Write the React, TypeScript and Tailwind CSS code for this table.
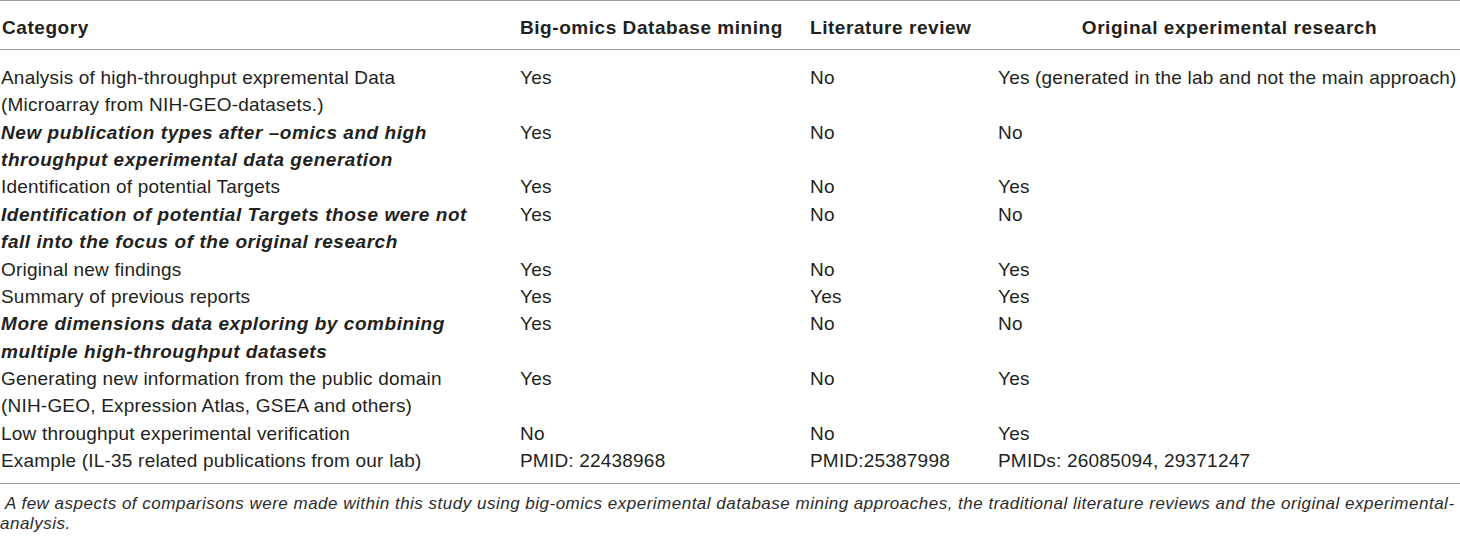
const rows: { cat: string[]; bold?: boolean; big: string; lit: string; orig: string }[] = [
  { cat: ['Analysis of high-throughput expremental Data', '(Microarray from NIH-GEO-datasets.)'], big: 'Yes', lit: 'No', orig: 'Yes (generated in the lab and not the main approach)' },
  { cat: ['New publication types after \u2013omics and high', 'throughput experimental data generation'], bold: true, big: 'Yes', lit: 'No', orig: 'No' },
  { cat: ['Identification of potential Targets'], big: 'Yes', lit: 'No', orig: 'Yes' },
  { cat: ['Identification of potential Targets those were not', 'fall into the focus of the original research'], bold: true, big: 'Yes', lit: 'No', orig: 'No' },
  { cat: ['Original new findings'], big: 'Yes', lit: 'No', orig: 'Yes' },
  { cat: ['Summary of previous reports'], big: 'Yes', lit: 'Yes', orig: 'Yes' },
  { cat: ['More dimensions data exploring by combining', 'multiple high-throughput datasets'], bold: true, big: 'Yes', lit: 'No', orig: 'No' },
  { cat: ['Generating new information from the public domain', '(NIH-GEO, Expression Atlas, GSEA and others)'], big: 'Yes', lit: 'No', orig: 'Yes' },
  { cat: ['Low throughput experimental verification'], big: 'No', lit: 'No', orig: 'Yes' },
  { cat: ['Example (IL-35 related publications from our lab)'], big: 'PMID: 22438968', lit: 'PMID:25387998', orig: 'PMIDs: 26085094, 29371247' },
];

const grid = 'grid grid-cols-[520px_290px_189px_461px]';

export default function App() {
  return (
    <div className="w-[1460px] h-[541px] bg-white text-[#231f20] overflow-hidden" style={{ fontFamily: '"Liberation Sans", Arial, sans-serif' }}>
      <div className="border-t border-[#9b9b9b]">
        {/* header */}
        <div className={`${grid} h-[49px] pt-[6px] items-center border-b-[1.5px] border-[#9b9b9b] text-[19px] font-bold tracking-[0.55px]`}>
          <div className="pl-[2px]">Category</div>
          <div>Big-omics Database mining</div>
          <div>Literature review</div>
          <div className="text-center">Original experimental research</div>
        </div>

        {/* body */}
        <div className="pt-[14px] pb-[9px] border-b-[1.5px] border-[#9b9b9b] text-[19px] leading-[27.36px] tracking-[0.2px]">
          {rows.map((r, i) => (
            <div key={i} className={grid}>
              <div className={r.bold ? 'pl-[1px] font-bold italic tracking-[0.55px]' : 'pl-[1px]'}>
                {r.cat.map((line, j) => (
                  <div key={j} className="whitespace-nowrap">{line}</div>
                ))}
              </div>
              <div className="whitespace-nowrap">{r.big}</div>
              <div className="whitespace-nowrap">{r.lit}</div>
              <div className="whitespace-nowrap -ml-[1px]">{r.orig}</div>
            </div>
          ))}
        </div>

        {/* caption */}
        <div className="pt-[10px] text-[17px] leading-[19.6px] italic tracking-[0.5px] text-[#2b2b2b]">
          <div className="pl-[5px] whitespace-nowrap">
            A few aspects of comparisons were made within this study using big-omics experimental database mining approaches, the traditional literature reviews and the original experimental-
          </div>
          <div>analysis.</div>
        </div>
      </div>
    </div>
  );
}
